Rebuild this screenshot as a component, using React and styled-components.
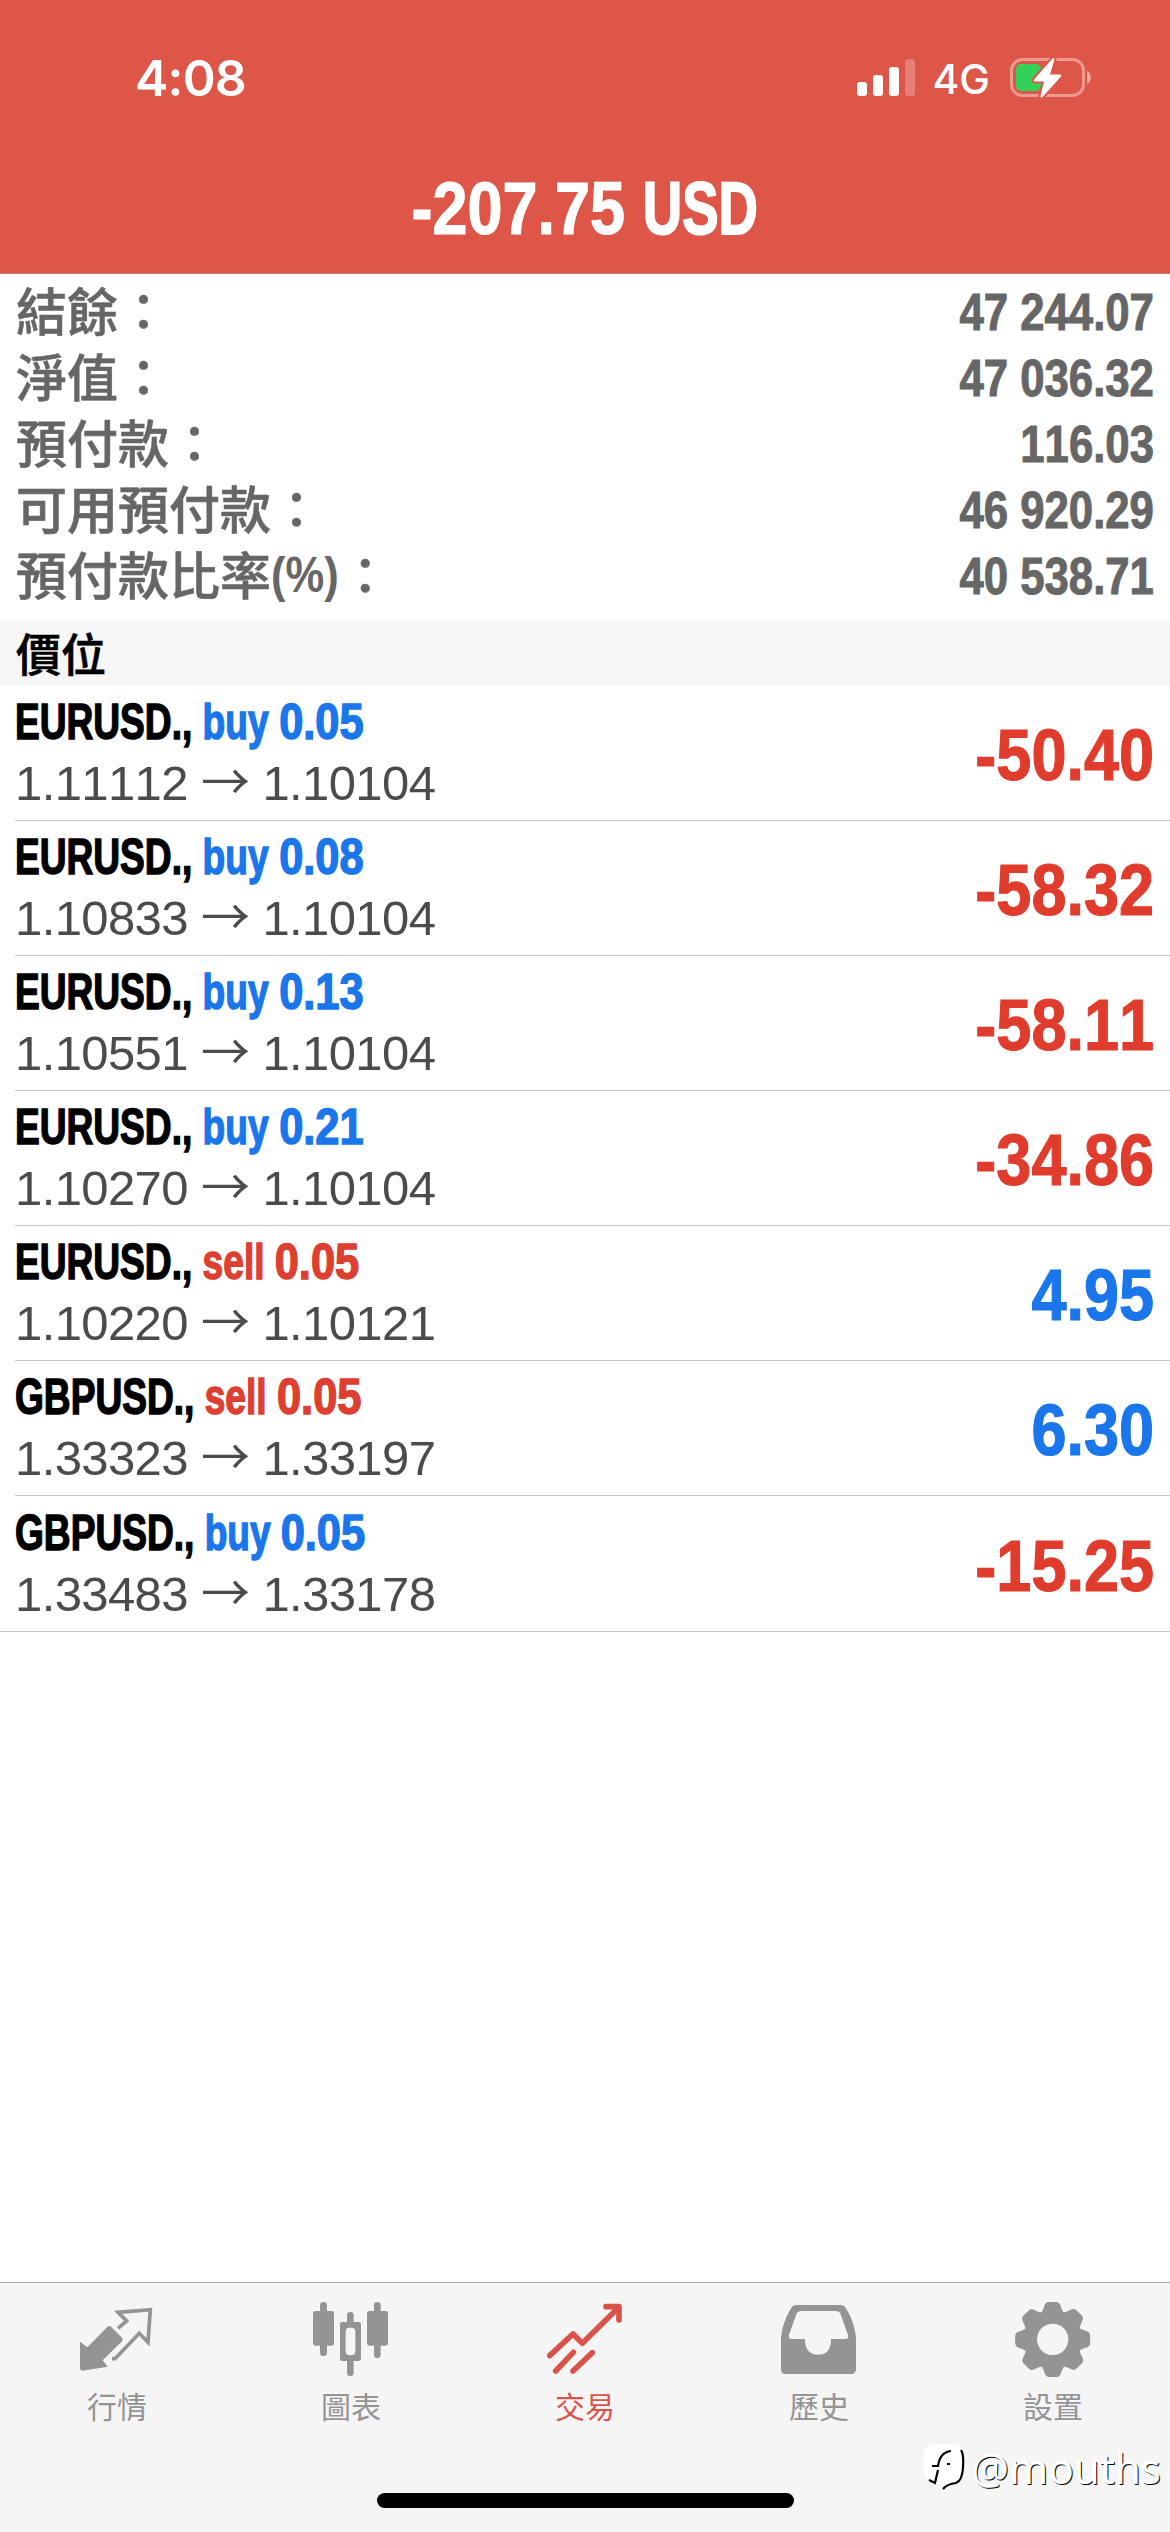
import React from "react";
import styled, { createGlobalStyle } from "styled-components";

const GlobalStyle = createGlobalStyle`
  * {
    box-sizing: border-box;
  }
  body {
    margin: 0;
    background: #ffffff;
    font-family: "Liberation Sans", "Noto Sans CJK TC", sans-serif;
    font-kerning: none;
  }
`;

const Screen = styled.div`
  position: relative;
  display: flex;
  flex-direction: column;
  width: 1170px;
  height: 2532px;
  overflow: hidden;
  background: #ffffff;
`;

const Header = styled.header`
  height: 274px;
  background: #de5648;
  border-bottom: 1px solid #b0847e;
  color: #ffffff;
`;

const StatusBar = styled.div`
  display: flex;
  align-items: center;
  justify-content: space-between;
  height: 156px;
  padding: 0 77px 0 135px;
`;

const Clock = styled.span`
  font: 600 50px/60px Inter, sans-serif;
  letter-spacing: -0.8px;
`;

const StatusIcons = styled.div`
  display: flex;
  align-items: center;
`;

const Network = styled.span`
  margin: 2px 20px 0 17px;
  font: 500 41px/50px Inter, sans-serif;
`;

const Profit = styled.h1`
  margin: 0;
  padding-top: 13px;
  text-align: center;
  font-size: 74px;
  line-height: 80px;
  font-weight: bold;
  white-space: nowrap;
  transform: scaleX(0.851);
  -webkit-text-stroke: 1.2px currentColor;
`;

const Currency = styled.span`
  display: inline-block;
  margin-right: -20px;
  transform: scaleX(0.865);
  transform-origin: left;
  -webkit-text-stroke: 2px currentColor;
`;

const Summary = styled.section`
  padding: 4px 16px 13px;
  height: 347px;
  color: #666666;
`;

const SummaryRow = styled.div`
  display: flex;
  align-items: center;
  justify-content: space-between;
  height: 66px;
`;

const Label = styled.span`
  padding-top: 6px;
  font-size: 51px;
  line-height: 60px;
  font-weight: 500;
  -webkit-text-stroke: 0.6px currentColor;
`;

const Unit = styled.span`
  display: inline-block;
  margin-right: -9px;
  font-size: 50px;
  font-weight: bold;
  line-height: 1;
  transform: translateY(-3px) scaleX(0.87);
  transform-origin: left;
  -webkit-text-stroke: 0;
`;

const Amount = styled.span`
  padding-top: 2px;
  font-size: 51px;
  font-weight: bold;
  transform: scaleX(0.857);
  transform-origin: right;
  -webkit-text-stroke: 1px currentColor;
`;

const SectionTitle = styled.h2`
  margin: 0;
  padding-left: 16px;
  height: 65px;
  background: #f6f6f6;
  color: #000000;
  font: 500 45px/64px "Noto Sans CJK TC", sans-serif;
  -webkit-text-stroke: 0.6px currentColor;
`;

const Deals = styled.ul`
  margin: 0;
  padding: 0 0 0 15px;
  list-style: none;
  border-bottom: 1px solid #c6c6c8;
`;

const Deal = styled.li`
  display: flex;
  align-items: center;
  justify-content: space-between;
  height: 135px;
  padding-right: 16px;
  border-bottom: 1px solid #c6c6c8;

  &:last-child {
    border-bottom: none;
  }
`;

const DealTitle = styled.div`
  height: 64px;
  font-size: 50px;
  line-height: 64px;
  font-weight: bold;
  white-space: pre;
  color: #000000;
  transform: scaleX(0.742);
  transform-origin: left;
  -webkit-text-stroke: 1.5px currentColor;
`;

const Side = styled.span`
  color: ${(props) => (props.$side === "buy" ? "#1a76ea" : "#dd3f30")};
`;

const Volume = styled.span`
  display: inline-block;
  transform: scaleX(1.17);
  transform-origin: left;
`;

const Prices = styled.div`
  height: 62px;
  font-size: 49px;
  line-height: 54px;
  letter-spacing: -0.6px;
  color: #4b4b4e;
  white-space: pre;
`;

const Arrow = styled.span`
  font-family: "Noto Sans CJK TC", sans-serif;
  line-height: 1;
`;

const Result = styled.span`
  padding-top: 3px;
  font-size: 73px;
  font-weight: bold;
  color: ${(props) => (props.$value < 0 ? "#e03c2d" : "#1a76ea")};
  transform: scaleX(0.863);
  transform-origin: right;
  -webkit-text-stroke: 1.2px currentColor;
`;

const TabBar = styled.nav`
  display: flex;
  margin-top: auto;
  height: 250px;
  padding-top: 18px;
  background: #f5f5f5;
  border-top: 1px solid #a9a9a9;
`;

const Tab = styled.div`
  flex: 1;
  display: flex;
  flex-direction: column;
  align-items: center;
  color: ${(props) => (props.$active ? "#d9534a" : "#949494")};

  svg {
    display: block;
    width: 76px;
    height: 76px;
  }
`;

const TabLabel = styled.span`
  margin-top: 6px;
  font: 400 30px/44px "Noto Sans CJK TC", sans-serif;
`;

const HomeIndicator = styled.div`
  position: absolute;
  left: 377px;
  bottom: 24px;
  width: 417px;
  height: 15px;
  border-radius: 8px;
  background: #000000;
`;

const Watermark = styled.div`
  position: absolute;
  right: 9px;
  bottom: 37px;
  display: flex;
  align-items: center;
  gap: 4px;
  color: #ffffff;
  font: 400 42px/54px "Noto Sans", sans-serif;
  text-shadow: 1px 1px 0 #000000;
`;

const SignalIcon = () => (
  <svg width="58" height="38" viewBox="0 0 58 38" fill="#fff">
    <rect x="0" y="23" width="10" height="14" rx="3" />
    <rect x="16" y="16" width="10" height="21" rx="3" />
    <rect x="32" y="8" width="10" height="29" rx="3" />
    <rect x="48" y="0" width="10" height="37" rx="3" opacity="0.25" />
  </svg>
);

const BatteryIcon = () => (
  <svg width="83" height="42" viewBox="0 0 83 42">
    <rect x="1.5" y="2.500" width="72" height="36" rx="11" fill="none" stroke="#fff" strokeOpacity="0.4" strokeWidth="3" />
    <path d="M77 14c5 2 5 11 0 13z" fill="#fff" fillOpacity="0.5" />
    <rect x="6" y="7" width="25" height="27" rx="5" fill="#33d158" />
    <path
      d="M42.500 1.500L24 22.500q-1 2 1.500 2H34L30.500 39q0 2.500 2 1L51 19.500q1-2-1.500-2H40L44.500 2.500q0-2.500-2-1z"
      fill="#fff"
      stroke="#de5648"
      strokeWidth="4"
      paintOrder="stroke"
    />
  </svg>
);

const QuotesIcon = () => (
  <svg viewBox="237 93 228 228">
    <path
      d="M240 215L262 232L322 171Q328 165 334 171L366 203Q371 209 365 215L308 271L323 290L248 302Q240 303 240 295Z"
      fill="currentColor"
    />
    <path
      d="M354 175L380 153L354 127L451 119L444 217L418 190L345 266H336"
      fill="none"
      stroke="currentColor"
      strokeWidth="11"
    />
  </svg>
);

const ChartIcon = () => (
  <svg viewBox="939 93 228 228" fill="currentColor">
    <rect x="960" y="96" width="21" height="162" rx="10" />
    <rect x="939" y="123" width="63" height="104" rx="7" />
    <rect x="1122" y="96" width="20" height="168" rx="10" />
    <rect x="1101" y="123" width="63" height="104" rx="7" />
    <rect x="1041" y="126" width="20" height="192" rx="10" />
    <rect x="1020" y="156" width="63" height="117" rx="7" />
    <rect x="1037" y="173" width="29" height="83" rx="12" fill="#f5f5f5" />
  </svg>
);

const TradeIcon = () => (
  <svg viewBox="291 93 228 228" fill="none" stroke="currentColor" strokeWidth="17" strokeLinecap="round" strokeLinejoin="round">
    <path d="M299 257L369 192L397 220L502 116" />
    <path d="M468 110H507V150" />
    <path d="M317 303L370 247M369 303L427 248" />
  </svg>
);

const HistoryIcon = () => (
  <svg viewBox="993 93 228 228" fill="currentColor" fillRule="evenodd">
    <path d="M1040 105H1171Q1182 105 1188 115Q1215 160 1218 205V298Q1218 312 1204 312H1007Q993 312 993 298V205Q996 160 1023 115Q1029 105 1040 105ZM1055 123Q1044 123 1039 133L1017 195Q1014 207 1026 207H1065Q1065 254 1105 254Q1143 254 1143 207H1186Q1197 207 1194 195L1172 133Q1168 123 1156 123Z" />
  </svg>
);

const SettingsIcon = () => (
  <svg viewBox="495 93 228 228" fill="currentColor">
    {[0, 45, 90, 135, 180, 225, 270, 315].map((angle) => (
      <path
        key={angle}
        d="M566 135Q577 128 582 110Q586 96 596 96H619Q629 96 633 110Q638 128 650 135L608 208Z"
        transform={`rotate(${angle} 608 208.500)`}
      />
    ))}
    <circle cx="608" cy="208" r="84" />
    <circle cx="608" cy="208" r="47" fill="#f5f5f5" />
  </svg>
);

const WatermarkLogo = () => (
  <svg width="44" height="50" viewBox="0 0 44 50">
    <path d="M12 1H31Q41 1 41 12V28Q41 40 26 42L21 47V43L10 39Q1 37 1 28V12Q1 1 12 1Z" fill="#fff" />
    <path
      d="M38 7Q41 11 40 25Q39 38 33 40Q24 41 20 46M9 23H15Q17 9 28 8M15 27L12 40L6 37M24 21H27"
      fill="none"
      stroke="#000"
      strokeWidth="2.200"
    />
  </svg>
);

const summary = [
  { label: "結餘", amount: "47 244.07" },
  { label: "淨值", amount: "47 036.32" },
  { label: "預付款", amount: "116.03" },
  { label: "可用預付款", amount: "46 920.29" },
  { label: "預付款比率", unit: "(%)", amount: "40 538.71" },
];

const deals = [
  { symbol: "EURUSD.", side: "buy", volume: "0.05", open: "1.11112", current: "1.10104", result: "-50.40" },
  { symbol: "EURUSD.", side: "buy", volume: "0.08", open: "1.10833", current: "1.10104", result: "-58.32" },
  { symbol: "EURUSD.", side: "buy", volume: "0.13", open: "1.10551", current: "1.10104", result: "-58.11" },
  { symbol: "EURUSD.", side: "buy", volume: "0.21", open: "1.10270", current: "1.10104", result: "-34.86" },
  { symbol: "EURUSD.", side: "sell", volume: "0.05", open: "1.10220", current: "1.10121", result: "4.95" },
  { symbol: "GBPUSD.", side: "sell", volume: "0.05", open: "1.33323", current: "1.33197", result: "6.30" },
  { symbol: "GBPUSD.", side: "buy", volume: "0.05", open: "1.33483", current: "1.33178", result: "-15.25" },
];

const tabs = [
  { label: "行情", Icon: QuotesIcon },
  { label: "圖表", Icon: ChartIcon },
  { label: "交易", Icon: TradeIcon, active: true },
  { label: "歷史", Icon: HistoryIcon },
  { label: "設置", Icon: SettingsIcon },
];

const App = () => {
  return (
    <Screen>
      <GlobalStyle />
      <Header>
        <StatusBar>
          <Clock>4:08</Clock>
          <StatusIcons>
            <SignalIcon />
            <Network>4G</Network>
            <BatteryIcon />
          </StatusIcons>
        </StatusBar>
        <Profit>
          -207.75 <Currency>USD</Currency>
        </Profit>
      </Header>
      <Summary>
        {summary.map((row) => (
          <SummaryRow key={row.label}>
            <Label>
              {row.label}
              {row.unit && <Unit>{row.unit}</Unit>}：
            </Label>
            <Amount>{row.amount}</Amount>
          </SummaryRow>
        ))}
      </Summary>
      <SectionTitle>價位</SectionTitle>
      <Deals>
        {deals.map((deal, index) => (
          <Deal key={index}>
            <div>
              <DealTitle>
                {deal.symbol},{" "}
                <Side $side={deal.side}>
                  {deal.side} <Volume>{deal.volume}</Volume>
                </Side>
              </DealTitle>
              <Prices>
                {deal.open} <Arrow>→</Arrow> {deal.current}
              </Prices>
            </div>
            <Result $value={Number(deal.result)}>{deal.result}</Result>
          </Deal>
        ))}
      </Deals>
      <TabBar>
        {tabs.map(({ label, Icon, active }) => (
          <Tab key={label} $active={active}>
            <Icon />
            <TabLabel>{label}</TabLabel>
          </Tab>
        ))}
      </TabBar>
      <Watermark>
        <WatermarkLogo />
        @mouths
      </Watermark>
      <HomeIndicator />
    </Screen>
  );
};

export default App;
